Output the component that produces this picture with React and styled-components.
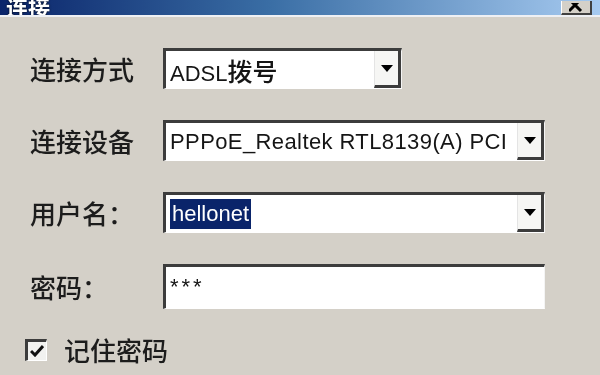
import React from "react";
import styled, { createGlobalStyle } from "styled-components";

const Global = createGlobalStyle`
  html, body {
    margin: 0;
    padding: 0;
    background: #d4d0c8;
  }
  body {
    font-family: "Liberation Sans", "Noto Sans CJK SC", sans-serif;
  }
`;

const Window = styled.div`
  width: 600px;
  height: 375px;
  overflow: hidden;
  background: #d4d0c8;
  display: flex;
  flex-direction: column;
  filter: blur(0.35px);
`;

const TitleBar = styled.div`
  height: 15px;
  flex-shrink: 0;
  overflow: hidden;
  display: flex;
  justify-content: space-between;
  align-items: flex-end;
  background: linear-gradient(to right, #0a246a 0%, #3a6ea5 45%, #a6caf0 100%);
  border-bottom: 2px solid #eef0f4;
`;

const Title = styled.span`
  margin-left: 6px;
  font-family: "Noto Sans CJK SC", sans-serif;
  font-weight: 700;
  font-size: 22px;
  line-height: 24px;
  margin-bottom: -3px;
  color: #ffffff;
  text-shadow: 0 0 2px #000;
`;

const CloseButton = styled.div`
  width: 28px;
  height: 12px;
  margin-right: 8px;
  background: #d4d0c8;
  border-left: 1px solid #ffffff;
  border-right: 2px solid #404040;
  border-bottom: 2px solid #404040;
  display: flex;
  justify-content: center;
  align-items: flex-end;
  overflow: hidden;
`;

const Form = styled.div`
  display: grid;
  grid-template-columns: 133px auto;
  row-gap: 31px;
  align-items: center;
  padding: 31px 0 0 30px;
`;

const Label = styled.span`
  font-family: "Noto Sans CJK SC", sans-serif;
  font-size: 26px;
  font-weight: 500;
  color: #1c1c1c;
  white-space: nowrap;
`;

const Field = styled.div`
  width: ${({ $width }) => $width}px;
  height: ${({ $height }) => $height}px;
  box-sizing: border-box;
  background: #ffffff;
  border-top: 3px solid #3c3c3c;
  border-left: 3px solid #3c3c3c;
  border-bottom: 1px solid #ffffff;
  border-right: 1px solid #f4f4f4;
  display: flex;
  align-items: center;
`;

const Value = styled.div`
  flex: 1;
  padding-left: 4px;
  font-size: 22px;
  letter-spacing: ${({ $spacing }) => $spacing || 0}px;
  color: #151515;
  white-space: nowrap;
  overflow: hidden;
  align-self: ${({ $top }) => ($top ? "flex-start" : "center")};
  padding-top: ${({ $top }) => ($top ? 7 : 0)}px;
`;

const Cjk = styled.span`
  font-family: "Noto Sans CJK SC", sans-serif;
  font-size: 25px;
  font-weight: 500;
  letter-spacing: 0;
`;

const Wide = styled.span`
  letter-spacing: 0.4px;
`;

const Selected = styled.span`
  display: inline-block;
  background: #0a246a;
  color: #ffffff;
  padding: 2px 2px 3px;
  line-height: 25px;
`;

const DropButton = styled.div`
  width: 27px;
  align-self: stretch;
  box-sizing: border-box;
  background: #f6f6f4;
  border-left: 1px solid #e4e4e4;
  border-right: 3px solid #3c3c3c;
  border-bottom: 3px solid #3c3c3c;
  display: flex;
  justify-content: center;
  align-items: center;
`;

const CheckRow = styled.div`
  display: flex;
  align-items: center;
  gap: 17px;
  padding: 22px 0 0 25px;
`;

const CheckBox = styled.div`
  width: 22px;
  height: 22px;
  box-sizing: border-box;
  background: #f2f2f0;
  border-top: 3px solid #3c3c3c;
  border-left: 3px solid #3c3c3c;
  border-bottom: 1px solid #ffffff;
  border-right: 1px solid #ffffff;
  display: flex;
  justify-content: center;
  align-items: center;
`;

const Arrow = () => (
  <svg width="12" height="7" viewBox="0 0 12 7">
    <path d="M0 0H12L6 7Z" fill="#000" />
  </svg>
);

const Check = () => (
  <svg width="14" height="12" viewBox="0 0 14 12">
    <path d="M1 6L5 10L13 1" fill="none" stroke="#111" strokeWidth="3" />
  </svg>
);

const CloseX = () => (
  <svg width="14" height="10" viewBox="0 0 14 10">
    <path d="M0 -4L12 8M12 -4L0 8" stroke="#000" strokeWidth="3" />
  </svg>
);

const Combo = ({ width, children }) => (
  <Field $width={width} $height={41}>
    <Value>{children}</Value>
    <DropButton>
      <Arrow />
    </DropButton>
  </Field>
);

export default function App() {
  return (
    <Window>
      <Global />
      <TitleBar>
        <Title>连接</Title>
        <CloseButton>
          <CloseX />
        </CloseButton>
      </TitleBar>
      <Form>
        <Label>连接方式</Label>
        <Combo width={239}>
          ADSL<Cjk>拨号</Cjk>
        </Combo>

        <Label>连接设备</Label>
        <Combo width={382}>
          <Wide>PPPoE_Realtek RTL8139(A) PCI</Wide>
        </Combo>

        <Label>用户名：</Label>
        <Combo width={382}>
          <Selected>hellonet</Selected>
        </Combo>

        <Label>密码：</Label>
        <Field $width={382} $height={45}>
          <Value $top $spacing={3}>***</Value>
        </Field>
      </Form>
      <CheckRow>
        <CheckBox>
          <Check />
        </CheckBox>
        <Label>记住密码</Label>
      </CheckRow>
    </Window>
  );
}
